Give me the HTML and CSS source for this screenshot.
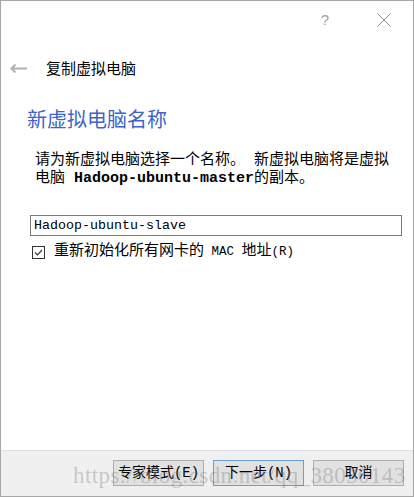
FILE: index.html
```html
<!DOCTYPE html>
<html lang="zh-CN">
<head>
<meta charset="utf-8">
<title>复制虚拟电脑</title>
<link rel="stylesheet" href="styles.css">
</head>
<body>
<div class="window">
  <div class="titlebar">
    <span class="help">?</span>
    <svg class="close" viewBox="0 0 14 14" width="14" height="14"><path d="M0.5 0.5 L13.5 13.5 M13.5 0.5 L0.5 13.5" stroke="#8a8a8a" stroke-width="1" fill="none"/></svg>
  </div>
  <div class="content">
    <div class="nav">
      <svg class="back" viewBox="0 0 17 9" width="17" height="9"><path d="M1.5 4.5 H17 M5.5 0.5 L1.5 4.5 L5.5 8.5" stroke="#b0b0b0" stroke-width="2" fill="none"/></svg>
      <span class="nav-title">复制虚拟电脑</span>
    </div>
    <h1 class="heading">新虚拟电脑名称</h1>
    <p class="desc">请为新虚拟电脑选择一个名称。 新虚拟电脑将是虚拟<br>电脑 <b>Hadoop-ubuntu-master</b>的副本。</p>
    <div class="name-field">Hadoop-ubuntu-slave</div>
    <label class="check-row">
      <span class="checkbox"><svg viewBox="0 0 11 11" width="11" height="11"><path d="M2 5.5 L4.5 8 L9 3" stroke="#2b3a4a" stroke-width="1.2" fill="none"/></svg></span>
      <span class="check-label">重新初始化所有网卡的<span class="half"> MAC </span>地址<span class="half">(R)</span></span>
    </label>
  </div>
  <div class="footer">
    <button class="btn">专家模式(E)</button>
    <button class="btn primary">下一步(N)</button>
    <button class="btn">取消</button>
  </div>
  <div class="watermark">https://blog.csdn.net/qq_38030143</div>
</div>
</body>
</html>
```
FILE: styles.css
```css
html, body {
  margin: 0;
  background: #fff;
}

.window {
  position: relative;
  width: 414px;
  height: 497px;
  box-sizing: border-box;
  border: 1px solid #a6a6a6;
  background: #fff;
  display: flex;
  flex-direction: column;
  overflow: hidden;
}

.titlebar {
  height: 37px;
  display: flex;
  align-items: center;
  justify-content: flex-end;
  padding-right: 22px;
  gap: 48px;
}

.help {
  font: 15px/1 "Liberation Sans", sans-serif;
  color: #a0a0a0;
}

.close {
  display: block;
}

.content {
  flex: 1;
}

.nav {
  display: flex;
  align-items: center;
  height: 24px;
  margin-top: 18px;
  padding-left: 9px;
  gap: 19px;
}

.back {
  display: block;
}

.nav-title {
  font: 15px/24px "Noto Sans CJK SC", sans-serif;
  color: #000;
}

.heading {
  margin: 27px 0 0 26px;
  font: 400 20px/24px "Noto Sans CJK SC", sans-serif;
  color: #3d64c9;
}

.desc {
  margin: 21px 0 0 34px;
  font: 15px/18px "Liberation Mono", "Noto Sans CJK SC", monospace;
  color: #000;
}

.desc b {
  font-weight: 700;
}

.name-field {
  margin: 27px 0 0 29px;
  width: 372px;
  height: 21px;
  box-sizing: border-box;
  border: 1px solid #7a7a7a;
  padding-left: 3px;
  font: 13.33px/19px "Liberation Mono", monospace;
  color: #000;
}

.check-row {
  display: flex;
  align-items: center;
  height: 20px;
  margin: 6px 0 0 31px;
  gap: 9px;
  font: 15px/20px "Liberation Mono", "Noto Sans CJK SC", monospace;
  color: #000;
}

.checkbox {
  width: 13px;
  height: 13px;
  box-sizing: border-box;
  border: 1px solid #333;
  background: #fff;
  display: flex;
  align-items: center;
  justify-content: center;
}

.checkbox svg {
  display: block;
}

.half {
  font-size: 12.5px;
}

.footer {
  height: 46px;
  box-sizing: border-box;
  border-top: 1px solid #dfdfdf;
  background: #f0f0f0;
  display: flex;
  justify-content: flex-end;
  align-items: flex-start;
  padding: 9px 9px 0 0;
  gap: 9px;
}

.btn {
  width: 91px;
  height: 26px;
  box-sizing: border-box;
  border: 1px solid #adadad;
  background: #e1e1e1;
  padding: 0;
  font: 14px/24px "Liberation Mono", "Noto Sans CJK SC", monospace;
  color: #000;
}

.btn.primary {
  border-color: #6a9fd5;
}

.watermark {
  position: absolute;
  left: 72px;
  top: 463px;
  font: 23px/23px "Liberation Serif", serif;
  letter-spacing: 0.4px;
  color: rgba(110, 110, 110, 0.32);
  white-space: nowrap;
  pointer-events: none;
}
```
